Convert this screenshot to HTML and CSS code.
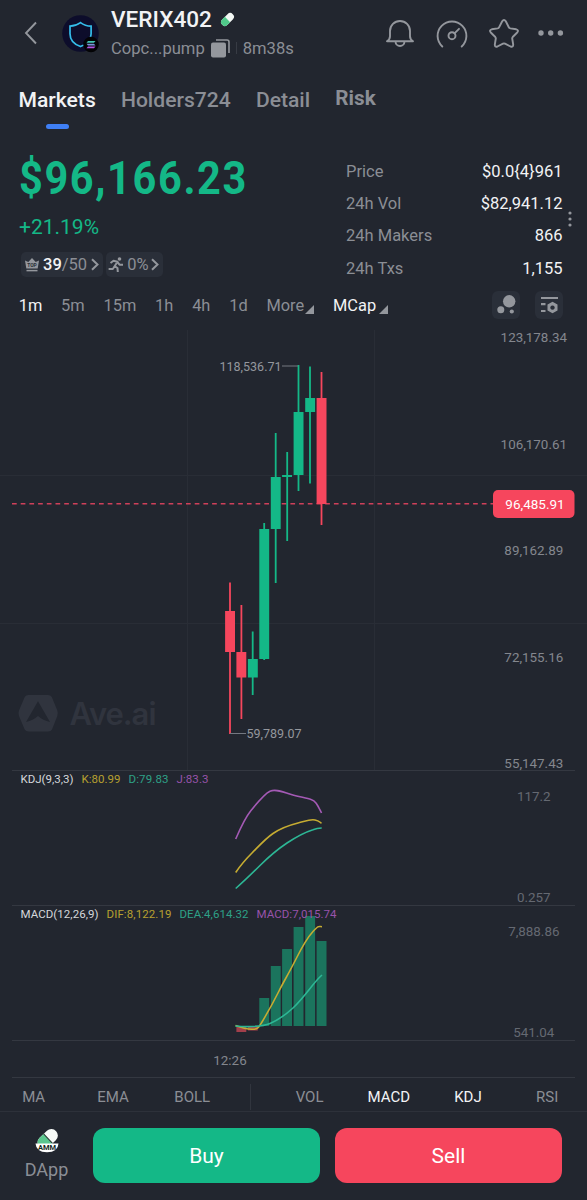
FILE: index.html
```html
<!DOCTYPE html>
<html lang="en">
<head>
<meta charset="utf-8">
<title>VERIX402</title>
<link rel="stylesheet" href="styles.css">
</head>
<body>
<div class="app">
  <header class="header">
    <svg class="back" width="14" height="24" viewBox="0 0 14 24"><path d="M12 1.5 2 12l10 10.5"/></svg>
    <svg class="avatar" width="38" height="38" viewBox="0 0 38 38">
      <circle cx="18.500" cy="18.500" r="18.300" fill="#0d0d2b"/>
      <path d="M18.500 7.600c3.500 2.600 7 3.500 10.600 3.600v7.500c0 6.500-4 10.500-10.600 12.800C12 29.200 8 25.200 8 18.700v-7.500c3.600-.1 7-1 10.500-3.600Z" fill="none" stroke="#35bdea" stroke-width="1.700"/>
      <circle cx="29" cy="29.500" r="7.800" fill="#030305"/>
      <path d="M26 26h7.500l-1.500 1.800h-7.500Z" fill="#43c6b5"/><path d="M24.500 28.700H32l1.500 1.800H26Z" fill="#7894dc"/><path d="M26 31.400h7.500L32 33.200h-7.500Z" fill="#b456e0"/>
    </svg>
    <div class="token">
      <div class="token-name">VERIX402
        <svg width="15" height="15" viewBox="0 0 16 16"><g transform="rotate(-45 8 8)"><rect x="0" y="4" width="16" height="8" rx="4" fill="#f3f8f5"/><path d="M8 4H4a4 4 0 0 0 0 8H8Z" fill="#50c98a"/></g></svg>
      </div>
      <div class="token-meta"><span>Copc...pump</span>
        <svg width="19" height="19" viewBox="0 0 19 19"><path d="M5 1h11a2 2 0 0 1 2 2v11" fill="none" stroke="#94979d" stroke-width="1.600"/><rect x="0" y="3.500" width="15" height="15" rx="2" fill="#94979d"/></svg>
        <i class="meta-rule"></i><span>8m38s</span></div>
    </div>
    <div class="actions">
      <svg width="28" height="28" viewBox="0 0 28 28"><path d="M1 21.300h26c-2-1.300-3-2.500-3-5V11A10 10 0 0 0 4 11v5.300c0 2.500-1 3.700-3 5ZM9.500 21.500a4.500 4.500 0 0 0 9 0"/></svg>
      <svg width="32" height="28" viewBox="0 0 32 28"><path d="M6.300 26.500a14.400 14.400 0 1 1 19.400 0M18.500 13.300l4.500-4.500"/><circle cx="16" cy="15.700" r="3.500"/></svg>
      <svg width="30" height="29" viewBox="0 0 30 29"><path d="M13.200 2.300q1.800-2.600 3.600 0l3 5.900q.5 1 1.600 1.200l5.800.9q2.900.9 1 3.200l-4.500 4.500q-.6.7-.5 1.500l1 6.200q0 2.700-2.600 1.800L16 24.700q-1-.5-2 0l-5.600 2.800q-2.600.9-2.600-1.800l1-6.200q.1-.8-.5-1.500l-4.500-4.500q-1.900-2.300 1-3.200l5.800-.9q1.100-.2 1.600-1.200Z"/></svg>
      <svg class="dots" width="26" height="6" viewBox="0 0 26 6"><circle cx="3" cy="3" r="2.700"/><circle cx="12.700" cy="3" r="2.700"/><circle cx="22.400" cy="3" r="2.700"/></svg>
    </div>
  </header>

  <nav class="tabs">
    <span class="tab tab-active">Markets</span><span class="tab">Holders724</span><span class="tab">Detail</span><span class="tab tab-risk">Risk</span>
  </nav>

  <section class="summary">
    <div class="quote">
      <div class="price">$96,166.23</div>
      <div class="change">+21.19%</div>
      <div class="badges">
        <span class="badge badge-top">
          <svg width="14" height="14" viewBox="0 0 14 14"><path d="M0 2.500 3.300 4 7 0l3.700 4L14 2.500 12.700 10.500H1.300Z" fill="#94979d"/><path d="M1.500 12.600h11" stroke="#94979d" stroke-width="1.500"/><text x="7" y="9.200" text-anchor="middle" class="crown-text">TOP</text></svg>
          <span><b>39</b>/50</span>
          <svg class="chev" width="8" height="13" viewBox="0 0 8 13"><path d="m1 1.200 5.500 5.300L1 11.800"/></svg>
        </span>
        <span class="badge badge-run">
          <svg class="runner" width="16" height="16" viewBox="0 0 16 16"><circle cx="11.500" cy="2" r="1.800"/><path d="M2.500 6 5.500 3.800l4 1-2.900 4.400L9.500 11l.3 4M6.500 9.500 4.800 12H.6M9.700 5.300l1.800 2.400H15"/></svg>
          <span>0%</span>
          <svg class="chev" width="8" height="13" viewBox="0 0 8 13"><path d="m1 1.200 5.500 5.300L1 11.800"/></svg>
        </span>
      </div>
    </div>
    <dl class="stats">
      <div><dt>Price</dt><dd>$0.0{4}961</dd></div>
      <div><dt>24h Vol</dt><dd>$82,941.12</dd></div>
      <div><dt>24h Makers</dt><dd>866</dd></div>
      <div><dt>24h Txs</dt><dd>1,155</dd></div>
    </dl>
    <svg class="more-stats" width="4" height="16" viewBox="0 0 4 16"><circle cx="2" cy="2" r="1.600"/><circle cx="2" cy="8" r="1.600"/><circle cx="2" cy="14" r="1.600"/></svg>
  </section>

  <div class="frames">
    <span class="on">1m</span><span>5m</span><span>15m</span><span>1h</span><span>4h</span><span>1d</span>
    <span class="drop">More<svg width="9" height="9" viewBox="0 0 9 9"><path d="M9 0v9H0Z"/></svg></span>
    <span class="drop drop-cap on">MCap<svg width="9" height="9" viewBox="0 0 9 9"><path d="M9 0v9H0Z"/></svg></span>
    <div class="tools">
      <svg class="tool" width="28" height="28" viewBox="0 0 28 28"><circle cx="17.200" cy="10.300" r="6.200"/><circle cx="8.800" cy="18.800" r="3.500"/><circle cx="19.800" cy="20.500" r="2.100"/></svg>
      <svg class="tool" width="28" height="28" viewBox="0 0 28 28"><path d="M6 7h17M6 13.200h4.500M6 20h4.500" fill="none" stroke="#94979d" stroke-width="2.200"/><path fill-rule="evenodd" d="m17.500 10.800 5 2.800v5.800l-5 2.800-5-2.800v-5.800Zm0 3.600a2.200 2.200 0 1 0 .01 0Z"/></svg>
    </div>
  </div>

  <svg class="chart" width="587" height="756" viewBox="0 322 587 756">
    <g class="grid"><path d="M187.500 330V770M374.500 330V770M0 475.500H587M0 623.500H587"/></g>
    <g class="rules"><path d="M12 770.500H575M12 905.500H575M12 1040.500H575M12 1077.500H575"/></g>

    <g class="mark">
      <path fill-rule="evenodd" d="M28.500 695h19.500q2.500 0 3.800 2l5.500 13.500q1 3 0 5.500L52 729.500q-1.200 2-3.800 2H28.500q-2.500 0-3.800-2L19 716q-1-2.800 0-5.500L24.700 697q1.300-2 3.800-2Zm9.500 6.300L26 722q7-1.500 12-6 5 4.500 12 6Z"/>
      <text class="mark-name" x="69.500" y="724.500" textLength="87">Ave.ai</text>
    </g>

    <path class="last" d="M12 503.800H494"/>
    <g class="up">
      <path d="M252.700 631.500V695M264.200 523V660M275.700 433V583M287.200 452V541M298.500 365V491M310 366.500V483.500"/>
      <path class="body" d="M247.900 659h9.900v18.500h-9.900ZM259.300 529h9.900v130h-9.900ZM270.800 477h9.900v52h-9.900ZM282.100 475h9.900v2h-9.900ZM293.600 412h9.900v63h-9.900ZM305.200 398h9.900v14h-9.900Z"/>
    </g>
    <g class="down">
      <path d="M230 582.500V734M241.400 605V719M321.500 372V525"/>
      <path class="body" d="M225.100 611h9.900v41h-9.900ZM236.400 652h9.900v25.500h-9.900ZM316.600 398h9.900v106h-9.900Z"/>
    </g>
    <path class="leader" d="M282 366H298M230 733.500H246"/>
    <text class="tip" x="219.500" y="370.500" textLength="62">118,536.71</text>
    <text class="tip" x="246.500" y="738" textLength="55">59,789.07</text>

    <g class="axis">
      <text x="533.800" y="342">123,178.34</text>
      <text x="533.800" y="448.500">106,170.61</text>
      <text x="533.800" y="555">89,162.89</text>
      <text x="533.800" y="661.500">72,155.16</text>
      <text x="533.800" y="767.500">55,147.43</text>
      <g class="axis-dim">
        <text x="533.800" y="801">117.2</text>
        <text x="533.800" y="902.400">0.257</text>
        <text x="533.800" y="935.500">7,888.86</text>
        <text x="533.800" y="1037">541.04</text>
      </g>
      <text x="230" y="1065">12:26</text>
    </g>
    <rect x="493" y="490" width="81.500" height="28" rx="5" fill="#f6465d"/>
    <text class="last-text" x="535" y="509.300">96,485.91</text>

    <g class="lines">
      <path class="j" d="M235.700 839C240 829 245 818 251 810.500S265 793.500 270 791.200 281 791.200 288 793.500 306 798 311 799.500 317.500 805 321.500 813"/>
      <path class="k" d="M235.700 872.500C240 866 246 859 252 853S265 839 273 833.500 290 825 298 823 310 819 315 820 319 822 321.500 823.200"/>
      <path class="d" d="M235.700 888.500C242 883 252 873.500 260 865.500S278 849 287 843 304 832.500 313 829.700Q317 828 321.700 828"/>
    </g>

    <g class="bars">
      <path d="M259.300 998h9.900v28h-9.900ZM270.800 966h9.900v60h-9.900ZM282.100 949h9.900v77h-9.900ZM293.600 927h9.900v99h-9.900ZM305.200 916h9.900v110h-9.900ZM316.600 941h9.900v85h-9.900Z"/>
      <path class="bars-red" d="M236.400 1026h9.900v6h-9.900ZM247.900 1026h9.900v4.500h-9.900Z"/>
    </g>
    <g class="lines">
      <path class="k" d="M235.500 1025.500C241 1027.500 246 1029 252 1029.300S259 1027 262 1022 274 1001 279 991 289 973 296 959 307 938 313 931.500 318.500 926.500 322 926.700"/>
      <path class="d" d="M235.500 1026C245 1027 262 1027 270 1023.500S286 1014.500 293 1008 306 993.500 312 986 318 978.500 322 975"/>
    </g>

    <g class="legend">
      <text class="c-white" x="20.500" y="783" textLength="53">KDJ(9,3,3)</text>
      <text class="c-k" x="81.500" y="783" textLength="39">K:80.99</text>
      <text class="c-d" x="128.500" y="783" textLength="40">D:79.83</text>
      <text class="c-j" x="176.500" y="783" textLength="32">J:83.3</text>
      <text class="c-white" x="20.500" y="918" textLength="78">MACD(12,26,9)</text>
      <text class="c-k" x="106.500" y="918" textLength="65">DIF:8,122.19</text>
      <text class="c-d" x="179.500" y="918" textLength="69">DEA:4,614.32</text>
      <text class="c-j" x="256.500" y="918" textLength="80">MACD:7,015.74</text>
    </g>
  </svg>

  <div class="indicators">
    <div class="ind-main"><span>MA</span><span>EMA</span><span>BOLL</span></div>
    <div class="ind-sub"><span>VOL</span><span class="on">MACD</span><span class="on">KDJ</span><span>RSI</span></div>
  </div>

  <footer class="footer">
    <div class="dapp">
      <svg width="24" height="25" viewBox="0 0 24 25">
        <g transform="rotate(-43 12 11)"><rect x="1" y="5" width="23" height="13" rx="6.500" fill="#f7faf8"/><path d="M13 5H7.500a6.500 6.500 0 0 0 0 13H13Z" fill="#5bc68e"/><path d="M13 5v13" stroke="#23362f" stroke-width="1"/></g>
        <path d="M.5 15.500h23q-.5 8.500-11.500 8.800Q1 24 .5 15.500Z" fill="#fff"/>
        <text class="amm" x="12" y="22" text-anchor="middle">AMM</text>
      </svg>
      <span>DApp</span>
    </div>
    <button class="trade buy">Buy</button>
    <button class="trade sell">Sell</button>
  </footer>
</div>
</body>
</html>
```
FILE: styles.css
```css
* { box-sizing: border-box; }
body { margin: 0; background: #22262f; font-family: Roboto, "Liberation Sans", sans-serif; color: #8b8e95; }
.app { width: 587px; height: 1200px; display: flex; flex-direction: column; overflow: hidden; }
svg { display: block; flex: none; }

.header { height: 74px; display: flex; padding-left: 24px; }
.back { margin-top: 21px; }
.back path { fill: none; stroke: #94979d; stroke-width: 1.900; }
.avatar { margin: 15px 0 0 24px; }
.token { margin: 6px 0 0 11px; width: 200px; }
.token-name { display: flex; align-items: center; gap: 8px; height: 26px; font-size: 22.600px; font-weight: 500; color: #f2f3f5; }
.token-meta { display: flex; align-items: center; height: 22px; margin-top: 5px; font-size: 16.600px; gap: 6px; }
.meta-rule { width: 1px; height: 12px; background: #373b44; }
.actions { display: flex; margin-left: 74.500px; }
.actions svg { fill: none; stroke: #94979d; stroke-width: 1.900; margin: 20px 22px 0 0; stroke-linejoin: round; stroke-linecap: round; }
.actions svg:nth-child(2) { margin-right: 21px; }
.actions svg:nth-child(3) { margin: 19px 19.500px 0 0; }
.actions .dots { fill: #94979d; stroke: none; margin: 30px 0 0; }

.tabs { height: 60px; padding: 12px 0 0 18.500px; display: flex; gap: 25.200px; font-size: 21.100px; font-weight: 500; line-height: 27px; }
.tab-active { color: #f2f3f5; display: flex; flex-direction: column; align-items: center; }
.tab-active::after { content: ""; width: 23px; height: 5px; border-radius: 3px; background: #3f7ff5; margin-top: 11px; }
.tab-risk { margin-top: -1px; font-weight: 700; font-size: 20.700px; }

.summary { height: 154px; display: flex; }
.quote { width: 346px; padding: 18px 0 0 19px; }
.price { font-size: 46px; line-height: 52px; font-weight: 700; color: #14b887; letter-spacing: 1.800px; white-space: nowrap; transform: scaleX(.902); transform-origin: 0 50%; }
.change { margin-top: 10px; font-size: 21px; line-height: 26px; color: #14b887; }
.badges { display: flex; gap: 3px; margin: 12px 0 0 2px; }
.badge { height: 25px; display: flex; align-items: center; background: #2a2f39; border-radius: 5px; font-size: 16.500px; padding: 0 3.500px 0 4px; gap: 4px; }
.badge b { color: #f2f3f5; font-weight: 500; }
.badge-run { gap: 3px; padding-left: 2.500px; }
.crown-text { font-size: 5px; font-weight: 700; fill: #2a2f39; }
.chev path { fill: none; stroke: #94979d; stroke-width: 2; }
.runner path { fill: none; stroke: #94979d; stroke-width: 2; stroke-linejoin: round; }
.runner circle, .more-stats { fill: #94979d; }
.stats { margin: 0; padding-top: 22px; width: 216.500px; font-size: 16.500px; }
.stats div { display: flex; justify-content: space-between; height: 32.200px; line-height: 32.200px; }
.stats dd { margin: 0; color: #f2f3f5; }
.more-stats { margin: 77px 0 0 5.500px; }

.frames { height: 34px; display: flex; align-items: center; padding-left: 18.700px; gap: 18.800px; font-size: 16.400px; }
.frames .on, .indicators .on { color: #f2f3f5; }
.drop { display: flex; align-items: center; gap: 1px; }
.drop svg { fill: #94979d; margin-top: 9px; }
.drop-cap { gap: 3px; }
.tools { display: flex; gap: 15px; margin-left: auto; padding-right: 24px; }
.tool { background: #2a2f39; border-radius: 6px; fill: #94979d; }

.grid path { stroke: #292d36; fill: none; }
.rules path { stroke: #343841; fill: none; }
.mark { fill: #30343e; }
.mark-name { font: 600 31px Inter, sans-serif; }
.last { stroke: #cf405a; stroke-width: 1.600; stroke-dasharray: 4.700 4; }
.up path { stroke: #14b887; stroke-width: 1.800; }
.down path { stroke: #f6465d; stroke-width: 1.800; }
.up .body { fill: #14b887; stroke: none; }
.down .body { fill: #f6465d; stroke: none; }
.leader { stroke: #747881; }
.tip { font-size: 12.500px; fill: #94979d; }
.axis { font-size: 13.400px; fill: #84878e; text-anchor: middle; }
.axis-dim { fill: #656972; }
.last-text { font-size: 13.500px; fill: #fff; text-anchor: middle; }
.lines path { fill: none; stroke-width: 1.600; }
.lines .j { stroke: #a45ab5; }
.lines .k { stroke: #c6ac32; }
.lines .d { stroke: #2db795; }
.bars path { fill: #1b745d; }
.bars .bars-red { fill: #a23f4b; }
.legend { font-size: 11.500px; }
.c-white { fill: #d5d7db; }
.c-k { fill: #b7a02f; }
.c-d { fill: #2ea187; }
.c-j { fill: #9853aa; }

.indicators { height: 34px; display: flex; align-items: center; border-bottom: 1px solid #2d313a; font-size: 15px; padding-top: 5px; text-align: center; }
.ind-main { width: 257px; height: 26px; margin-left: -6px; border-right: 1px solid #31353e; display: grid; grid-template-columns: repeat(3, 79.300px); align-items: center; }
.ind-sub { flex: none; display: grid; grid-template-columns: repeat(4, 79.200px); padding-left: 19px; }

.footer { height: 88px; display: flex; }
.dapp { width: 93px; padding-top: 16px; display: flex; flex-direction: column; align-items: center; font-size: 18px; line-height: 22px; gap: 6px; }
.amm { font-size: 7.500px; font-weight: 700; fill: #152a22; }
.trade { width: 227px; height: 55px; margin: 16px 15px 0 0; padding: 0; border: 0; border-radius: 12px; font: 400 21px Roboto, sans-serif; color: #fff; }
.buy { background: #14b887; }
.sell { background: #f6465d; margin-right: 0; }
```
